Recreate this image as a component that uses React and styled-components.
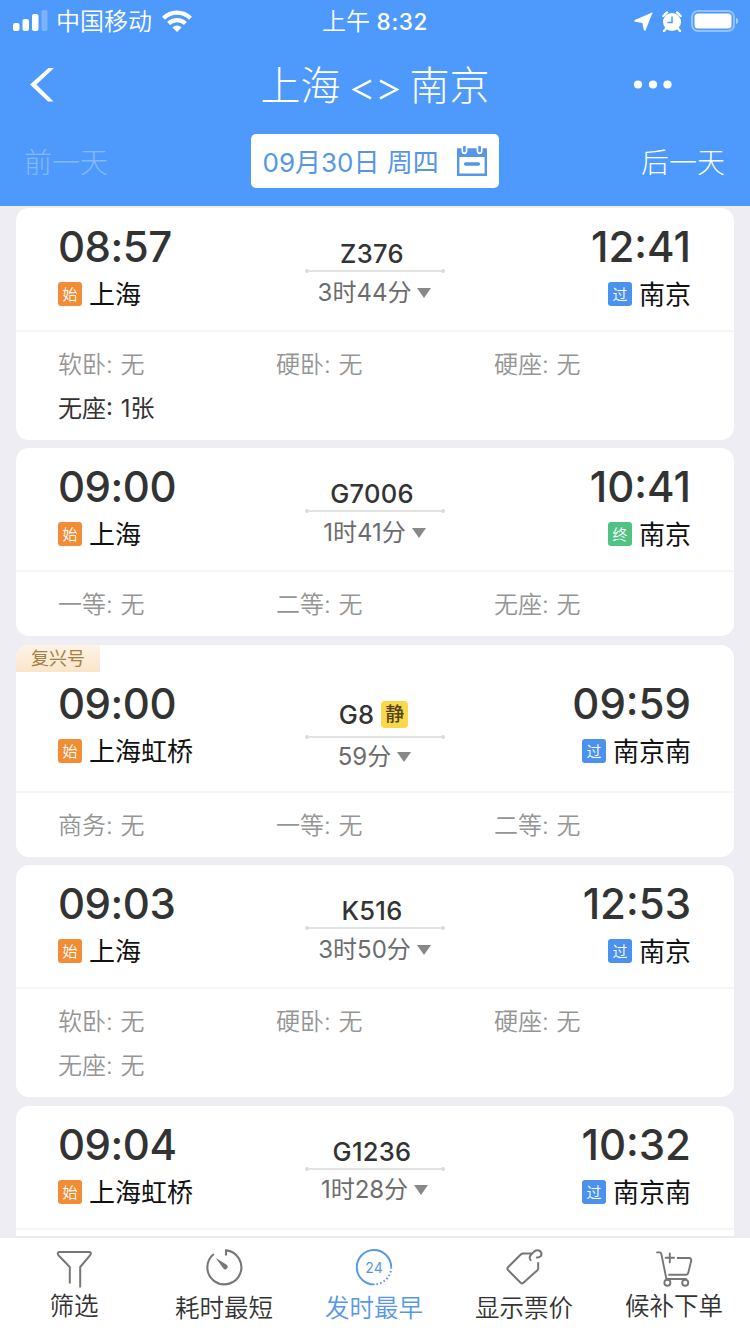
import React from "react";
import styled, { createGlobalStyle } from "styled-components";

const Global = createGlobalStyle`
  * { box-sizing: border-box; }
  body {
    margin: 0;
    background: #ededf3;
    font-family: Inter, "Noto Sans CJK SC", sans-serif;
    color: #333;
    overflow: hidden;
  }
`;

const Screen = styled.div`
  width: 750px;
  height: 1334px;
  display: flex;
  flex-direction: column;
  overflow: hidden;
`;

const Header = styled.header`
  flex: none;
  height: 206px;
  background: #4e99fc;
  color: #fff;
`;

const StatusBar = styled.div`
  height: 40px;
  padding: 0 11px 0 13px;
  display: grid;
  grid-template-columns: 1fr auto 1fr;
  align-items: center;
  font-size: 24px;
  line-height: 40px;
`;

const StatusGroup = styled.div`
  display: flex;
  align-items: center;
  justify-content: ${(p) => (p.$end ? "flex-end" : "flex-start")};
  gap: ${(p) => (p.$end ? 9 : 0)}px;
  svg { flex: none; }
`;

const Carrier = styled.span`
  margin: 2px 10px 0 8px;
  font-weight: 350;
`;

const Clock = styled.span`
  font-weight: 500;
  font-size: 22.5px;
  letter-spacing: 0.6px;
  padding: 1px 2px 0 0;
  span { font-size: 24px; font-weight: 350; letter-spacing: 0; }
`;

const TitleBar = styled.div`
  height: 90px;
  padding: 0 77px 0 29px;
  display: grid;
  grid-template-columns: 40px 1fr 40px;
  align-items: center;
`;

const Title = styled.h1`
  margin: 2px 0 0;
  padding-left: 48px;
  text-align: center;
  font-size: 40px;
  line-height: 60px;
  font-weight: 300;
  white-space: nowrap;
`;

const Arrows = styled.span`
  display: inline-flex;
  gap: 7px;
  margin: 0 11px;
  padding-bottom: 2px;
`;

const DateBar = styled.div`
  height: 62px;
  padding: 0 25px 0 24px;
  display: flex;
  justify-content: space-between;
  align-items: center;
`;

const DayLink = styled.span`
  font-size: 28px;
  line-height: 40px;
  font-weight: 300;
  padding-top: 3px;
  opacity: ${(p) => (p.$off ? 0.3 : 1)};
`;

const DateButton = styled.div`
  width: 248px;
  height: 54px;
  border-radius: 5px;
  background: #fff;
  color: #5596e6;
  display: flex;
  align-items: center;
  justify-content: space-between;
  padding: 0 11px 2px 12px;
  font-size: 26px;
  white-space: nowrap;
  svg { margin-top: 2px; }
`;

const List = styled.main`
  flex: 1;
  min-height: 0;
  overflow: hidden;
  padding: 2px 16px 0;
  display: flex;
  flex-direction: column;
  gap: 8.4px;
`;

const Card = styled.article`
  flex: none;
  background: #fff;
  border-radius: 13px;
  overflow: hidden;
  display: flex;
  flex-direction: column;
`;

const Tag = styled.div`
  width: 84px;
  height: 27px;
  margin-bottom: -7px;
  background: linear-gradient(#fdf4e8, #fbe5c9);
  color: #a67f42;
  font-size: 18px;
  line-height: 27px;
  text-align: center;
`;

const Trip = styled.div`
  height: ${(p) => (p.$tagged ? 128 : 124)}px;
  padding: 0 43px 0 42px;
  display: grid;
  grid-template-columns: 1fr 140px 1fr;
  border-bottom: 2px solid #f6f6f8;
`;

const Stop = styled.div`
  padding-top: 14px;
  display: flex;
  flex-direction: column;
  align-items: ${(p) => (p.$end ? "flex-end" : "flex-start")};
`;

const Time = styled.div`
  font-size: 42px;
  line-height: 50px;
  font-weight: 500;
  letter-spacing: ${(p) => (p.$dep ? -0.5 : 0)}px;
  white-space: nowrap;
`;

const Station = styled.div`
  display: flex;
  align-items: center;
  gap: 7px;
  height: 44px;
  font-size: 26px;
  line-height: 42px;
  color: #111;
  white-space: nowrap;
`;

const StationName = styled.span`
  padding-top: 2px;
`;

const badgeColors = { 始: "#f28c35", 过: "#4b91ee", 终: "#4fc284" };

const Badge = styled.span`
  width: 24px;
  height: 24px;
  border-radius: 3px;
  background: ${(p) => badgeColors[p.$kind]};
  color: #fff;
  font-size: 15px;
  font-weight: 350;
  line-height: 25px;
  text-align: center;
`;

const Middle = styled.div`
  display: flex;
  flex-direction: column;
  align-items: center;
  padding-top: ${(p) => (p.$tagged ? 32 : 29)}px;
`;

const TrainNo = styled.div`
  height: ${(p) => (p.$tagged ? 39 : 33)}px;
  padding: 0 ${(p) => (p.$tagged ? 2 : 5)}px ${(p) => (p.$tagged ? 3 : 0)}px 0;
  display: flex;
  align-items: center;
  gap: 7px;
  font-size: 25.5px;
  font-weight: 500;
  letter-spacing: 0.3px;
  white-space: nowrap;
`;

const Quiet = styled.span`
  width: 27px;
  height: 27px;
  border-radius: 4px;
  background: #f9d84c;
  color: #54431a;
  font-size: 19px;
  letter-spacing: 0;
  line-height: 27px;
  text-align: center;
`;

const Rule = styled.div`
  width: 140px;
  height: 2px;
  background: #e2e2e2;
  display: flex;
  justify-content: space-between;
  align-items: center;
  &::before, &::after {
    content: "";
    width: 4px;
    height: 4px;
    border-radius: 50%;
    background: #dcdcdc;
  }
`;

const Duration = styled.div`
  height: ${(p) => (p.$tagged ? 34 : 36)}px;
  display: flex;
  align-items: center;
  gap: 6px;
  font-size: 24px;
  color: #6c6c6c;
  white-space: nowrap;
`;

const Caret = styled.i`
  border: solid transparent;
  border-width: 10px 7.5px 0;
  border-top-color: #888;
  margin-top: 5px;
`;

const Seats = styled.div`
  padding: 10px 42px;
  display: grid;
  grid-template-columns: repeat(3, 218px);
  grid-auto-rows: 44px;
`;

const Seat = styled.span`
  font-size: 24px;
  line-height: 45px;
  font-weight: ${(p) => (p.$open ? 400 : 350)};
  word-spacing: 1px;
  white-space: nowrap;
  color: ${(p) => (p.$open ? "#333" : "#959595")};
`;

const TabBar = styled.nav`
  flex: none;
  height: 98px;
  background: #fff;
  border-top: 2px solid #ececf0;
  padding-right: 2px;
  display: grid;
  grid-template-columns: repeat(5, 150px);
  margin-right: -2px;
  margin-left: -1px;
`;

const Tab = styled.div`
  display: flex;
  flex-direction: column;
  align-items: center;
  padding-top: 10px;
  color: ${(p) => (p.$active ? "#5797e8" : "#333")};
  svg { display: block; color: ${(p) => (p.$active ? "#5797e8" : "#777")}; }
`;

const TabLabel = styled.span`
  font-size: 24.5px;
  line-height: 34px;
  font-weight: 350;
  margin-top: ${(p) => (p.$raised ? 1 : 3)}px;
  white-space: nowrap;
`;

const Signal = () => (
  <svg width="35" height="22" viewBox="0 0 35 22" fill="#fff">
    <rect x="0" y="13" width="6.5" height="8" rx="2" />
    <rect x="9.5" y="9" width="6.5" height="12" rx="2" />
    <rect x="19" y="4" width="6.5" height="17" rx="2" />
    <rect x="28.5" y="0" width="6" height="21" rx="2" opacity=".25" />
  </svg>
);

const Wifi = () => (
  <svg width="30" height="22" viewBox="0 0 30 22" fill="none" stroke="#fff" strokeWidth="4.2">
    <path d="M1.5 8.2a19.2 19.2 0 0 1 27 0" />
    <path d="M6.6 13.5a12 12 0 0 1 16.8 0" />
    <path d="M15 22l-4.6-4.6a6.6 6.6 0 0 1 9.2 0z" fill="#fff" stroke="none" />
  </svg>
);

const Location = () => (
  <svg width="19" height="19" viewBox="0 0 19 19" fill="#fff">
    <path d="M18.7 0.3 11.6 18.2Q10.6 19.4 9.8 18L8.4 11 1 9.8Q-.4 8.9.8 7.9Z" />
  </svg>
);

const Alarm = () => (
  <svg width="20" height="21" viewBox="0 0 20 21">
    <circle cx="10" cy="11" r="9" fill="#fff" />
    <path d="M1.3 5 5 1.4M18.7 5 15 1.4M4 17.5 2 20M16 17.5 18 20" stroke="#fff" strokeWidth="2.4" strokeLinecap="round" />
    <path d="M10 5.4v6H5.4" fill="none" stroke="#4e99fc" strokeWidth="1.5" />
  </svg>
);

const Battery = () => (
  <svg width="48" height="22" viewBox="0 0 48 22">
    <rect x="1" y="1" width="42" height="20" rx="6" fill="none" stroke="#fff" strokeOpacity=".4" strokeWidth="2" />
    <rect x="3.5" y="3.5" width="37" height="15" rx="3.5" fill="#fff" />
    <path d="M45 7.5q2.4 1 2.4 3.5t-2.4 3.5z" fill="#fff" opacity=".5" />
  </svg>
);

const Back = () => (
  <svg width="26" height="36" viewBox="0 0 26 36" fill="#fff">
    <path d="M19.5 1H25L7.4 17.5 24.5 34.5H19L1 17.5Z" />
  </svg>
);

const Dots = () => (
  <svg width="40" height="10" viewBox="0 0 40 10" fill="#fff">
    <circle cx="5" cy="4.5" r="4.1" />
    <circle cx="20" cy="4.5" r="4.1" />
    <circle cx="34.5" cy="4.5" r="4.1" />
  </svg>
);

const Angle = ({ flip }) => (
  <svg width="20" height="21" viewBox="0 0 20 21" fill="none" stroke="#fff" strokeWidth="2.5">
    <path d={flip ? "M1 1.6 18 10.5 1 19.4" : "M19 1.6 2 10.5 19 19.4"} />
  </svg>
);

const Calendar = () => (
  <svg width="32" height="32" viewBox="0 0 32 32" fill="none" stroke="#5596e6">
    <path d="M2.2 4v25.8h27.6V4" strokeWidth="2.4" />
    <path d="M1 3.2h4.4v2.4q0 3.6 3 3.6t3-3.6V3.2h9.2v2.4q0 3.6 3 3.6t3-3.6V3.2H31V12H1z" fill="#5596e6" stroke="none" />
    <path d="M8.4 2v4M23.6 2v4" strokeWidth="2.6" strokeLinecap="round" />
    <path d="M9.6 19h12.8" strokeWidth="3.4" strokeLinecap="round" />
  </svg>
);

const Funnel = () => (
  <svg width="40" height="40" viewBox="0 0 40 40" fill="none" stroke="currentColor" strokeWidth="2" strokeLinejoin="round">
    <path d="M15.8 35.6V19L4.4 7.2Q2.6 4.4 5.4 4h29.8Q38 4.4 36.2 7.2L26.2 19V39.4" />
  </svg>
);

const Stopwatch = () => (
  <svg width="40" height="40" viewBox="0 0 40 40" fill="none" stroke="currentColor" strokeWidth="2.1">
    <path d="M22 7.4V2.4A17 17 0 1 1 9.8 6" />
    <path d="M11.6 9.8 23 17A2.5 2.5 0 1 1 19.4 20.6Z" fill="currentColor" stroke="none" />
  </svg>
);

const Day24 = () => (
  <svg width="40" height="40" viewBox="0 0 40 40" fill="none" stroke="currentColor" strokeWidth="1.9">
    <path d="M20.6 36.4A17.2 17.2 0 1 1 37.2 19.2" />
    <path d="M37.2 19.2A17.2 17.2 0 0 1 20.6 36.4" strokeDasharray="1.6 2.2" />
    <text x="20" y="24.6" textAnchor="middle" fontSize="14" fill="currentColor" stroke="none" fontFamily="Inter, sans-serif">24</text>
  </svg>
);

const PriceTag = () => (
  <svg width="40" height="40" viewBox="0 0 40 40" fill="none" stroke="currentColor" strokeWidth="2" strokeLinecap="round" strokeLinejoin="round">
    <path d="M27 5.4H19Q17.8 5.4 17 6.2L4 19.2Q2.8 20.6 4 22L16.6 34.8Q18 36.2 19.4 34.8L33.4 22.2Q34.2 21.4 34.2 20.4V15" />
    <path d="M26.6 12.2Q24.6 9.4 27 6.8L30.4 3.4Q33 1.4 36 3 38.6 5.2 36.8 8.2 35.4 9.8 32.8 9.6" />
  </svg>
);

const Cart = () => (
  <svg width="40" height="40" viewBox="0 0 40 40" fill="none" stroke="currentColor" strokeWidth="1.9" strokeLinecap="round" strokeLinejoin="round">
    <path d="M3 4.4H5.6Q7 4.4 7.3 5.8L12.4 31M23.6 10H35Q37.6 10.2 37.2 12.8L34.4 24.2Q33.8 26.8 31.8 26.8H15M12.4 31H32" />
    <path d="M15.8 5.4v9M11.6 9.8h8.4" />
    <circle cx="13.4" cy="34.8" r="3" />
    <circle cx="31.2" cy="34.8" r="3" />
  </svg>
);

const trains = [
  { no: "Z376", dep: "08:57", arr: "12:41", from: "上海", to: "南京", end: "过", time: "3时44分", seats: [["软卧", "无"], ["硬卧", "无"], ["硬座", "无"], ["无座", "1张"]] },
  { no: "G7006", dep: "09:00", arr: "10:41", from: "上海", to: "南京", end: "终", time: "1时41分", seats: [["一等", "无"], ["二等", "无"], ["无座", "无"]] },
  { no: "G8", dep: "09:00", arr: "09:59", from: "上海虹桥", to: "南京南", end: "过", time: "59分", tag: "复兴号", quiet: true, seats: [["商务", "无"], ["一等", "无"], ["二等", "无"]] },
  { no: "K516", dep: "09:03", arr: "12:53", from: "上海", to: "南京", end: "过", time: "3时50分", seats: [["软卧", "无"], ["硬卧", "无"], ["硬座", "无"], ["无座", "无"]] },
  { no: "G1236", dep: "09:04", arr: "10:32", from: "上海虹桥", to: "南京南", end: "过", time: "1时28分", seats: [] },
];

const tabs = [
  { label: "筛选", icon: Funnel, raised: true },
  { label: "耗时最短", icon: Stopwatch },
  { label: "发时最早", icon: Day24, active: true },
  { label: "显示票价", icon: PriceTag },
  { label: "候补下单", icon: Cart, raised: true },
];

const TrainCard = ({ t }) => (
  <Card>
    {t.tag && <Tag>{t.tag}</Tag>}
    <Trip $tagged={!!t.tag}>
      <Stop>
        <Time $dep>{t.dep}</Time>
        <Station><Badge $kind="始">始</Badge><StationName>{t.from}</StationName></Station>
      </Stop>
      <Middle $tagged={!!t.tag}>
        <TrainNo $tagged={!!t.tag}>{t.no}{t.quiet && <Quiet>静</Quiet>}</TrainNo>
        <Rule />
        <Duration $tagged={!!t.tag}>{t.time}<Caret /></Duration>
      </Middle>
      <Stop $end>
        <Time>{t.arr}</Time>
        <Station><Badge $kind={t.end}>{t.end}</Badge><StationName>{t.to}</StationName></Station>
      </Stop>
    </Trip>
    <Seats>
      {t.seats.map(([name, left]) => (
        <Seat key={name} $open={left !== "无"}>{name}: {left}</Seat>
      ))}
    </Seats>
  </Card>
);

export default function App() {
  return (
    <Screen>
      <Global />
      <Header>
        <StatusBar>
          <StatusGroup><Signal /><Carrier>中国移动</Carrier><Wifi /></StatusGroup>
          <Clock><span>上午</span> 8:32</Clock>
          <StatusGroup $end><Location /><Alarm /><Battery /></StatusGroup>
        </StatusBar>
        <TitleBar>
          <Back />
          <Title>上海<Arrows><Angle /><Angle flip /></Arrows>南京</Title>
          <Dots />
        </TitleBar>
        <DateBar>
          <DayLink $off>前一天</DayLink>
          <DateButton>09月30日 周四<Calendar /></DateButton>
          <DayLink>后一天</DayLink>
        </DateBar>
      </Header>
      <List>
        {trains.map((t) => <TrainCard key={t.no} t={t} />)}
      </List>
      <TabBar>
        {tabs.map(({ label, icon: Icon, active, raised }) => (
          <Tab key={label} $active={active}>
            <Icon />
            <TabLabel $raised={raised}>{label}</TabLabel>
          </Tab>
        ))}
      </TabBar>
    </Screen>
  );
}
